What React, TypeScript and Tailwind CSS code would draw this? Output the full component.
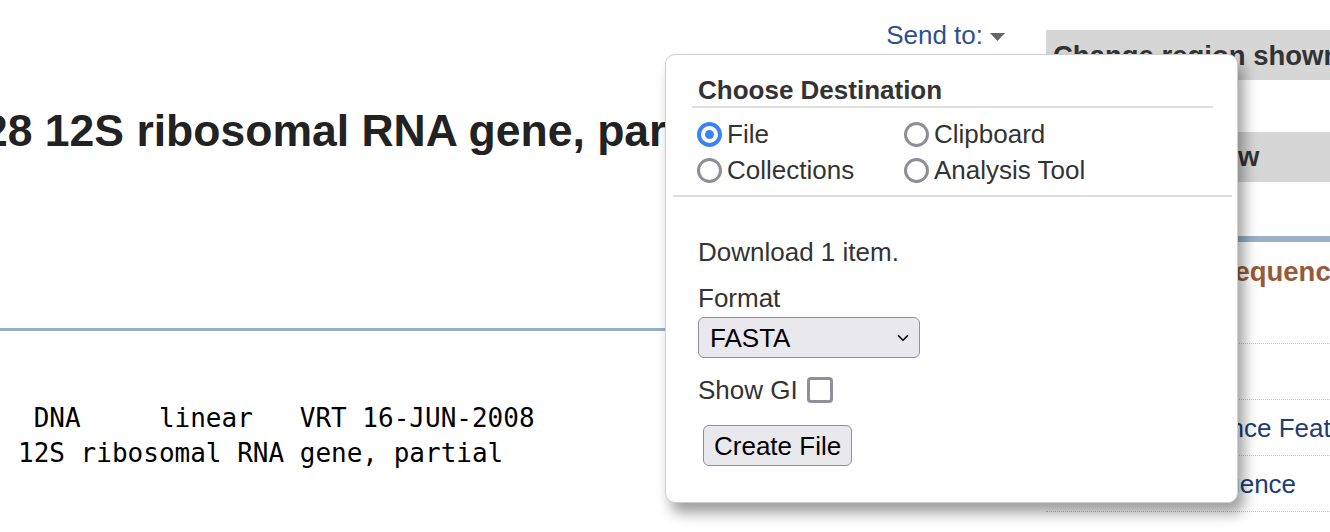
import { ChevronDown } from "lucide-react";

const SIDEBAR_LINKS = ["Run BLAST", "Pick Primers", "Highlight Sequence Features", "Find in this Sequence"];

function Radio({ checked, label }: { checked?: boolean; label: string }) {
  return (
    <label className="flex h-[36px] items-center gap-[5px]">
      {checked ? (
        <span className="flex h-[25px] w-[25px] items-center justify-center rounded-full border-[4.5px] border-[#3b82f6] bg-white">
          <span className="h-[9px] w-[9px] rounded-full bg-[#3b82f6]" />
        </span>
      ) : (
        <span className="h-[25px] w-[25px] rounded-full border-[3.5px] border-[#8e8e99] bg-white" />
      )}
      <span>{label}</span>
    </label>
  );
}

function SendToPopup() {
  return (
    <div className="absolute left-[665px] top-[54px] h-[449px] w-[573px] rounded-[10px] border border-[#cfcfcf] bg-white text-[26px] leading-[30px] text-[#333] shadow-[6px_10px_14px_rgba(0,0,0,0.38)]">
      <div className="ml-[26px] mr-[24px] pt-[20px]">
        <div className="border-b-2 border-[#dedede] pb-[1px] pl-[6px] font-bold">Choose Destination</div>
        <div className="mt-[8px] mb-[7px] grid grid-cols-[207px_1fr] pl-[5px]">
          <Radio checked label="File" />
          <Radio label="Clipboard" />
          <Radio label="Collections" />
          <Radio label="Analysis Tool" />
        </div>
      </div>
      <div className="ml-[7px] mr-[5px] border-t-2 border-[#dedede]" />
      <div className="pl-[32px] pt-[40px]">
        <div>Download 1 item.</div>
        <div className="mt-[16px]">Format</div>
        <div className="mt-[4px] flex h-[41px] w-[222px] items-center justify-between rounded-[6px] border-[1.5px] border-[#8f8f9d] bg-[#e9e9ed] pl-[11px] pr-[7px] text-black">
          <span>FASTA</span>
          <ChevronDown className="h-[18px] w-[18px]" strokeWidth={2.2} />
        </div>
        <div className="mt-[17px] flex h-[30px] items-center gap-[9px]">
          <span>Show GI</span>
          <span className="h-[26px] w-[26px] rounded-[4px] border-[3px] border-[#8f8f9d] bg-white" />
        </div>
        <button className="ml-[5px] mt-[20px] h-[41px] w-[149px] rounded-[6px] border-[1.5px] border-[#8f8f9d] bg-[#e9e9ed] pl-[10px] text-left text-black">
          Create File
        </button>
      </div>
    </div>
  );
}

export default function App() {
  return (
    <div className="relative h-[532px] w-[1330px] overflow-hidden bg-white font-['Liberation_Sans',Arial,sans-serif]">
      <div className="flex">
        <main className="w-[1046px] shrink-0 overflow-hidden">
          <div className="flex items-center justify-end gap-[7px] pr-[41px] pt-[20px] text-[26px] leading-[30px] text-[#2f4f93]">
            <span>Send to:</span>
            <svg width="15" height="8" viewBox="0 0 15 8" className="mt-[3px]">
              <path d="M0 0h15L7.5 8z" fill="#666" />
            </svg>
          </div>
          <h1 className="-ml-[17px] mt-[57px] whitespace-nowrap text-[44.5px] font-bold leading-[48px] text-[#222]">
            28 12S ribosomal RNA gene, partial sequence; mitochondrial
          </h1>
          <div className="mt-[173px] h-[3px] bg-[#97aec6]" />
          <pre className="mt-[70px] pl-[18px] font-['DejaVu_Sans_Mono',monospace] text-[26px] leading-[35px] text-black">
            {" DNA     linear   VRT 16-JUN-2008\n12S ribosomal RNA gene, partial"}
          </pre>
        </main>
        <aside className="w-[300px] shrink-0 pt-[30px]">
          <div className="h-[50px] whitespace-nowrap bg-[#d6d6d6] pl-[7px] pt-[10px] text-[27.5px] font-bold leading-[32px] text-[#333]">
            Change region shown
          </div>
          <div className="mt-[52px] h-[50px] whitespace-nowrap bg-[#d6d6d6] pl-[7px] pt-[9px] text-[27.5px] font-bold leading-[32px] text-[#333]">
            Customize view
          </div>
          <div className="mt-[54px] h-[6px] bg-[#9cb1c7]" />
          <div className="mt-[14px] whitespace-nowrap pl-[5px] text-[27.5px] font-bold leading-[32px] text-[#985a38]">
            Analyze this sequence
          </div>
          <ul>
            {SIDEBAR_LINKS.map((link) => (
              <li
                key={link}
                className="h-[56px] whitespace-nowrap border-b border-dotted border-[#c4c4c4] pt-[13px] text-[26px] leading-[30px] text-[#1f3c74]"
              >
                {link}
              </li>
            ))}
          </ul>
        </aside>
      </div>
      <SendToPopup />
    </div>
  );
}
